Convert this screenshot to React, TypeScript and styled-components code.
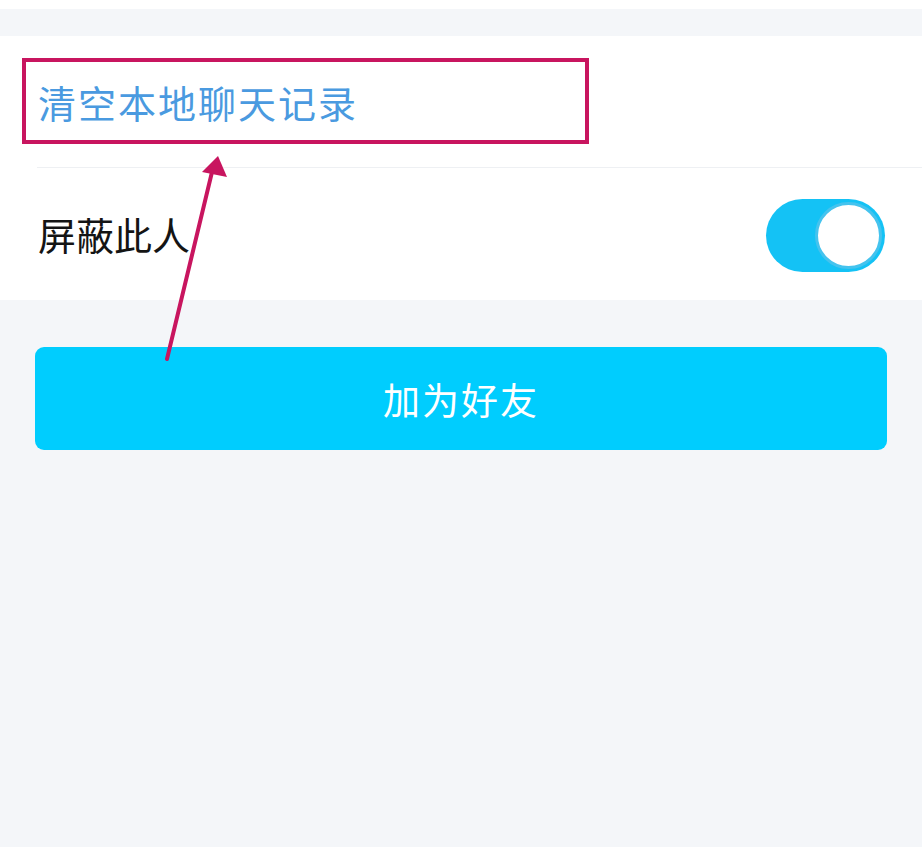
import React, { FunctionComponent, useState } from 'react';
import styled, { createGlobalStyle } from 'styled-components';

const GlobalStyle = createGlobalStyle`
  html, body {
    margin: 0;
    padding: 0;
    background: #f4f6f9;
  }
  body {
    font-family: "Noto Sans CJK SC", "Noto Sans", sans-serif;
  }
`;

const Page = styled.div`
  position: relative;
  width: 922px;
  height: 847px;
  background: #f4f6f9;
  overflow: hidden;
`;

const TopStrip = styled.div`
  height: 9px;
  background: #ffffff;
`;

const Panel = styled.div`
  margin-top: 27px;
  background: #ffffff;
`;

const Row = styled.div<{ $divider?: boolean }>`
  position: relative;
  height: 132px;
  display: flex;
  align-items: center;
  justify-content: space-between;
  padding: 0 38px 0 38px;
  box-sizing: border-box;
  ${p => p.$divider && `
    &::after {
      content: '';
      position: absolute;
      left: 37px;
      right: 0;
      bottom: 0;
      height: 1px;
      background: #eef0f3;
    }
  `}
`;

const Label = styled.span<{ $blue?: boolean }>`
  font-size: 38px;
  line-height: 1;
  letter-spacing: ${p => (p.$blue ? '2px' : '0px')};
  color: ${p => (p.$blue ? '#4a9ae0' : '#141414')};
  margin-top: ${p => (p.$blue ? '0px' : '-1px')};
`;

const Toggle = styled.button<{ $on: boolean }>`
  position: relative;
  width: 119px;
  height: 73px;
  margin-right: -1px;
  margin-top: 2px;
  border: none;
  border-radius: 37px;
  padding: 0;
  background: ${p => (p.$on ? '#14c2f5' : '#dcdfe4')};
  cursor: pointer;
`;

const Knob = styled.span<{ $on: boolean }>`
  position: absolute;
  top: 3px;
  left: ${p => (p.$on ? '49px' : '3px')};
  width: 61px;
  height: 61px;
  border-radius: 50%;
  background: #ffffff;
  border: 3px solid #45c3ee;
`;

const ButtonWrap = styled.div`
  padding: 47px 35px 0 35px;
`;

const AddButton = styled.button`
  width: 100%;
  height: 103px;
  border: none;
  border-radius: 9px;
  background: #00cdfe;
  color: #ffffff;
  font-family: "Noto Sans CJK SC", "Noto Sans", sans-serif;
  font-size: 37px;
  letter-spacing: 2px;
  cursor: pointer;
`;

const Highlight = styled.div`
  position: absolute;
  left: 22px;
  top: 58px;
  width: 567px;
  height: 86px;
  box-sizing: border-box;
  border: 4px solid #c8155f;
  pointer-events: none;
`;

const ArrowLayer = styled.svg`
  position: absolute;
  left: 0;
  top: 0;
  pointer-events: none;
`;

const App: FunctionComponent = () => {
  const [blocked, setBlocked] = useState(true);

  return (
    <Page>
      <GlobalStyle />
      <TopStrip />
      <Panel>
        <Row $divider>
          <Label $blue>清空本地聊天记录</Label>
        </Row>
        <Row>
          <Label>屏蔽此人</Label>
          <Toggle $on={blocked} onClick={() => setBlocked(!blocked)}>
            <Knob $on={blocked} />
          </Toggle>
        </Row>
      </Panel>
      <ButtonWrap>
        <AddButton>加为好友</AddButton>
      </ButtonWrap>

      <Highlight />
      <ArrowLayer width="922" height="847" viewBox="0 0 922 847">
        <line x1="167" y1="359" x2="212" y2="172" stroke="#c8155f" strokeWidth="4" strokeLinecap="round" />
        <polygon points="218,156 202,172 227,177" fill="#c8155f" />
      </ArrowLayer>
    </Page>
  );
};

export default App;
